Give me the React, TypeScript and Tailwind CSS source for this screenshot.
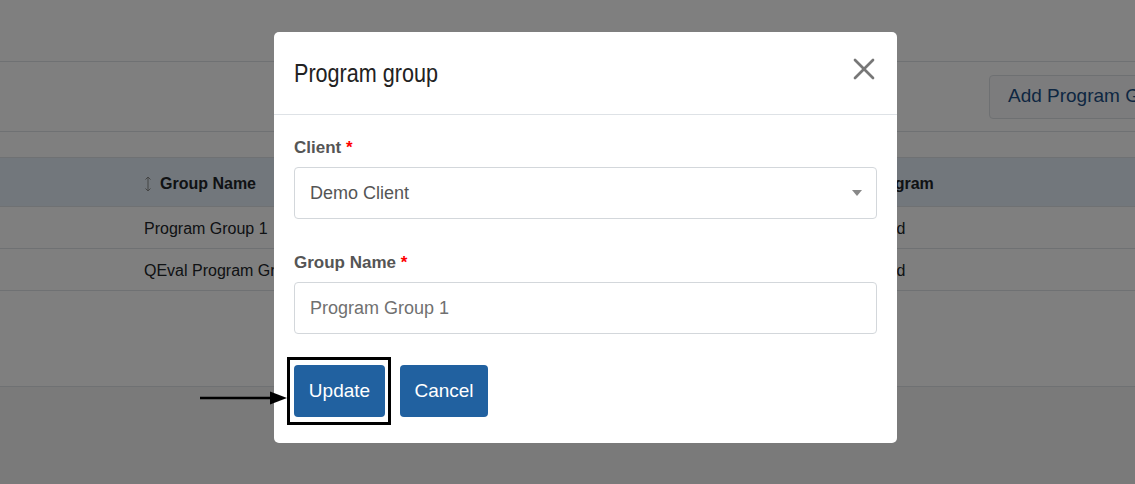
import { X } from "lucide-react";

const rows = [
  { name: "Program Group 1", program: "Used" },
  { name: "QEval Program Group", program: "Used" },
];

function SortIcon() {
  return (
    <svg width="8" height="16" viewBox="0 0 8 16" className="mr-[8px]">
      <path d="M4 1 L4 15 M1.5 3.5 L4 1 L6.5 3.5 M1.5 12.5 L4 15 L6.5 12.5" stroke="#8a8a8a" strokeWidth="1" fill="none" />
    </svg>
  );
}

export default function App() {
  return (
    <div className="relative w-[1135px] h-[484px] overflow-hidden bg-[#f4f4f4] font-['Liberation_Sans',Arial,sans-serif]">
      {/* Page under the overlay */}
      <div className="h-[62px] bg-white border-b border-[#dee2e6]" />
      <div className="bg-white">
        <div className="h-[70px] flex items-center justify-end border-b border-[#dee2e6]">
          <button className="h-[44px] mr-[-62px] px-[18px] bg-[#f8f9fa] border border-[#dde1e5] rounded-[4px] text-[#1c4f85] text-[19px] whitespace-nowrap">
            Add Program Group
          </button>
        </div>
        <div className="h-[26px] border-b border-[#dee2e6]" />
        <div className="h-[49px] pt-[3px] bg-[#e4eef8] border-b border-[#dee2e6] flex items-center text-[16px] font-bold text-[#212529]">
          <div className="w-[144px]" />
          <div className="w-[724px] flex items-center">
            <SortIcon />
            Group Name
          </div>
          <div>Program</div>
        </div>
        {rows.map((r) => (
          <div key={r.name} className="h-[42px] pt-[2px] border-b border-[#dee2e6] flex items-center text-[16px] text-[#212529]">
            <div className="w-[144px]" />
            <div className="w-[724px]">{r.name}</div>
            <div>{r.program}</div>
          </div>
        ))}
        <div className="h-[96px] border-b border-[#dee2e6]" />
      </div>

      {/* Overlay */}
      <div className="absolute inset-0 bg-black/50" />

      {/* Modal */}
      <div className="absolute left-[274px] top-[32px] w-[623px] h-[411px] bg-white rounded-[5px] flex flex-col">
        <div className="h-[83px] px-5 flex items-center justify-between border-b border-[#dee2e6]">
          <h2 className="text-[26px] text-[#222] origin-left scale-x-[0.83] whitespace-nowrap">
            Program group
          </h2>
          <X className="w-[36px] h-[36px] text-[#777] mr-[-5px] mt-[-9px]" strokeWidth={1.8} />
        </div>
        <div className="px-5 pt-[23px]">
          <label className="block text-[17px] font-bold text-[#555] leading-[20px]">
            Client <span className="text-[#ff0000]">*</span>
          </label>
          <div className="mt-[9px] h-[52px] border border-[#d3d7db] rounded-[4px] flex items-center justify-between pl-[15px] pr-[14px]">
            <span className="text-[18px] text-[#555]">Demo Client</span>
            <svg width="10" height="6" viewBox="0 0 10 6">
              <path d="M0 0 L10 0 L5 6 Z" fill="#888" />
            </svg>
          </div>
          <label className="block mt-[34px] text-[17px] font-bold text-[#555] leading-[20px]">
            Group Name <span className="text-[#ff0000]">*</span>
          </label>
          <div className="mt-[9px] h-[52px] border border-[#d3d7db] rounded-[4px] flex items-center pl-[15px]">
            <span className="text-[18px] text-[#707070]">Program Group 1</span>
          </div>
          <div className="mt-[31px] flex gap-[15px]">
            <div className="relative">
              <button className="h-[52px] w-[91px] rounded-[4px] bg-[#2161a0] text-white text-[19px]">Update</button>
              <div className="absolute left-[-7px] right-[-6px] top-[-8px] bottom-[-8px] border-[3px] border-black" />
            </div>
            <button className="h-[52px] w-[88px] rounded-[4px] bg-[#2161a0] text-white text-[19px]">Cancel</button>
          </div>
        </div>
      </div>

      {/* Arrow pointing at Update */}
      <svg className="absolute left-[198px] top-[390px]" width="90" height="16" viewBox="0 0 90 16">
        <line x1="2" y1="8" x2="76" y2="8" stroke="black" strokeWidth="2.5" />
        <path d="M72 1.5 L89 8 L72 14.5 Z" fill="black" />
      </svg>
    </div>
  );
}
